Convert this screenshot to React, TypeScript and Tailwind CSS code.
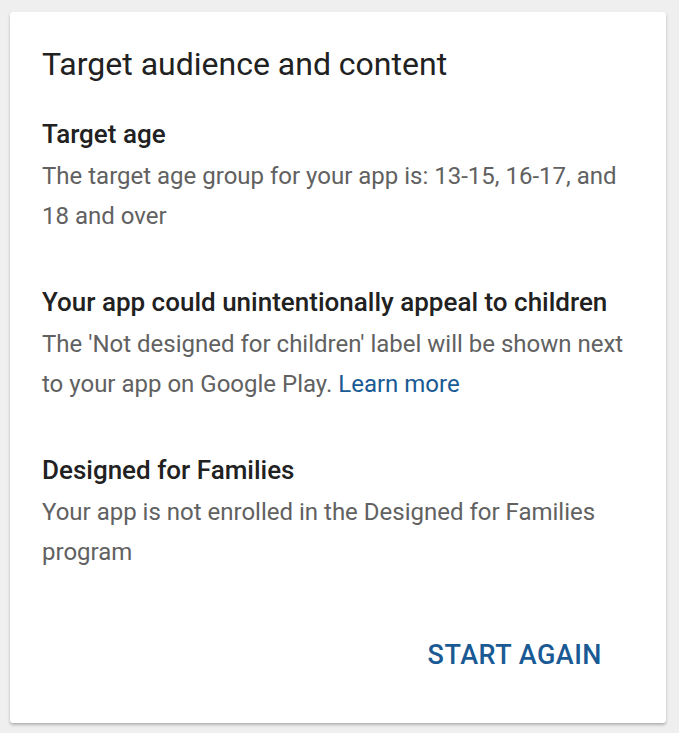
export default function App() {
  const sections = [
    {
      title: 'Target age',
      body: <>The target age group for your app is: 13-15, 16-17, and 18 and over</>,
    },
    {
      title: 'Your app could unintentionally appeal to children',
      body: (
        <>
          The 'Not designed for children' label will be shown next to your app on Google Play.{' '}
          <a className="text-[#1a5a94]">Learn more</a>
        </>
      ),
    },
    {
      title: 'Designed for Families',
      body: <>Your app is not enrolled in the Designed for Families program</>,
    },
  ];

  return (
    <div className="min-h-[733px] bg-[#efefef] pt-3 pl-[10px] pr-[13px] font-['Roboto',sans-serif]">
      <div className="bg-white rounded-[3px] shadow-[0_2px_3px_rgba(0,0,0,0.25)] h-[711px] pl-8 pr-8 pt-[34px]">
        <h1 className="text-[32px] leading-[36px] text-[#212121]">Target audience and content</h1>
        <div className="mt-9 flex flex-col gap-[50px]">
          {sections.map((s) => (
            <div key={s.title}>
              <h2 className="text-[26px] leading-[32px] font-medium text-[#212121]">{s.title}</h2>
              <p className="mt-1.5 text-[24px] leading-[40px] text-[#616161]">{s.body}</p>
            </div>
          ))}
        </div>
        <div className="flex justify-end mt-[68px] pr-8">
          <button className="text-[27px] leading-[30px] font-medium text-[#1a5a94] tracking-[0.5px]">START AGAIN</button>
        </div>
      </div>
    </div>
  );
}
